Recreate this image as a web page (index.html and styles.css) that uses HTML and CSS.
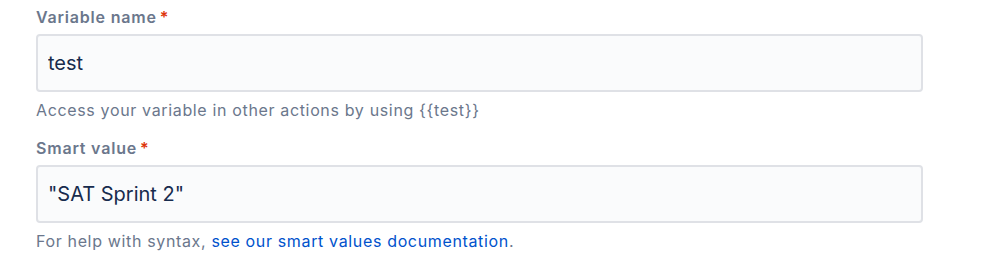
FILE: index.html
```html
<!DOCTYPE html>
<html lang="en">
<head>
  <meta charset="UTF-8" />
  <title>Create variable</title>
  <link rel="stylesheet" href="styles.css">
</head>
<body>
  <form class="form">
    <div class="field">
      <label class="label" for="varName">Variable name<span class="required">*</span></label>
      <input id="varName" class="text-input" type="text" value="test">
      <div class="helper">Access your variable in other actions by using {{test}}</div>
    </div>
    <div class="field">
      <label class="label" for="smartValue">Smart value<span class="required">*</span></label>
      <input id="smartValue" class="text-input" type="text" value="&quot;SAT Sprint 2&quot;">
      <div class="helper">For help with syntax, <a href="#">see our smart values documentation</a>.</div>
    </div>
  </form>
</body>
</html>
```

FILE: styles.css
```css
body {
  margin: 0;
  padding: 5px 0 0 36px;
  background: #fff;
  font-family: Inter, "Noto Sans", sans-serif;
}
.form {
  width: 887px;
}
.field {
  display: flex;
  flex-direction: column;
}
.field + .field {
  margin-top: 14px;
}
.label {
  font-size: 16px;
  font-weight: 600;
  line-height: 24px;
  letter-spacing: 0.8px;
  color: #6b778c;
}
.required {
  color: #de350b;
  margin-left: 3px;
}
.text-input {
  box-sizing: border-box;
  height: 58px;
  margin-top: 5px;
  padding: 0 10px;
  border: 2px solid #dfe1e6;
  border-radius: 4px;
  background: #fafbfc;
  font-family: inherit;
  font-size: 20px;
  color: #172b4d;
  outline: none;
}
.helper {
  margin-top: 6px;
  font-size: 16px;
  line-height: 24px;
  letter-spacing: 0.65px;
  color: #6b778c;
}
.helper a {
  color: #0052cc;
  text-decoration: none;
}
```
